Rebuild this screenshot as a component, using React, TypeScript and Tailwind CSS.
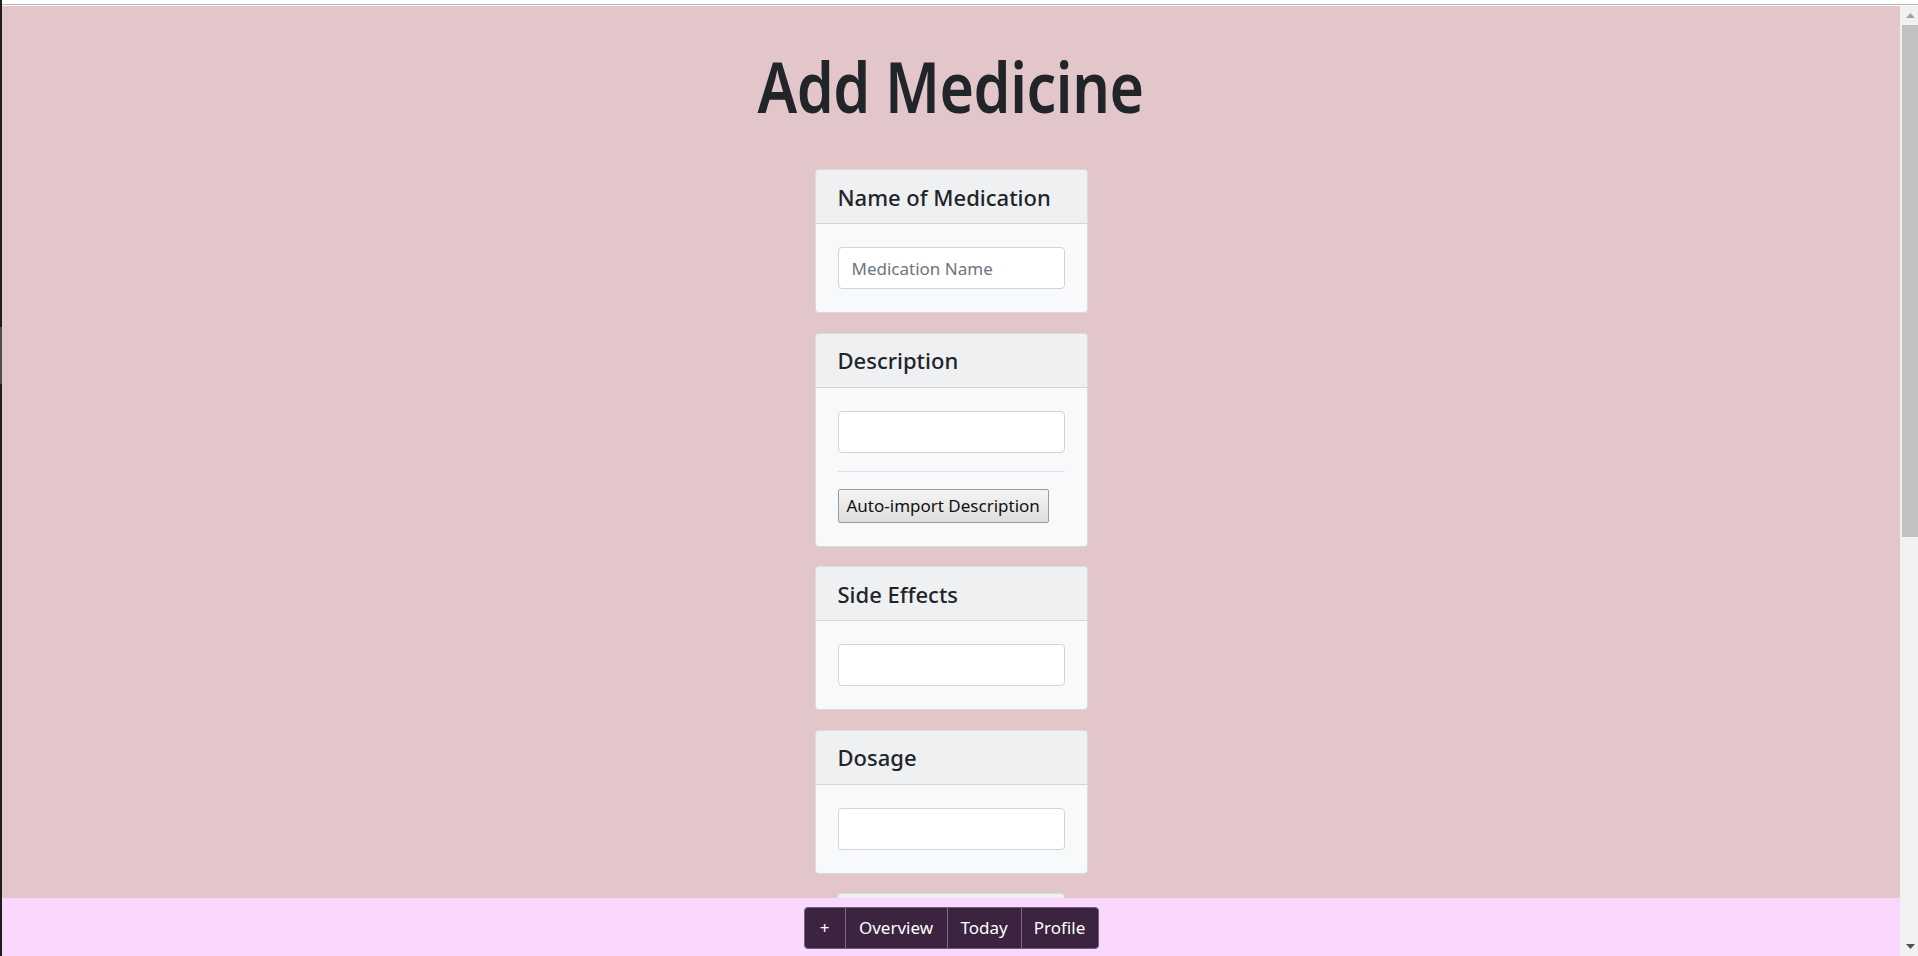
import React from "react";

function Card({ title, children }: { title: string; children: React.ReactNode }) {
  return (
    <div className="w-[273px] rounded-[4px] border border-[#dadbdc] bg-[#f8f9fa] overflow-hidden">
      <div className="h-[54px] flex items-center px-[22px] border-b border-[#d3d4d6] bg-[#eff0f2] text-[22px] font-medium leading-none text-[#212529]">
        {title}
      </div>
      <div className="px-[22px] py-[23px]">{children}</div>
    </div>
  );
}

function Field({ placeholder }: { placeholder?: string }) {
  return (
    <input
      placeholder={placeholder}
      className="block w-full h-[42px] rounded-[4px] border border-[#ced4da] bg-white px-[13px] text-[17px] text-[#495057] placeholder:text-[#6c757d] outline-none"
    />
  );
}

export default function App() {
  return (
    <div className="flex w-[1918px] h-[956px] overflow-hidden font-['Noto_Sans',sans-serif] bg-white">
      <div className="w-[2px] flex flex-col">
        <div className="h-[327px] bg-[#1e1e1e]" />
        <div className="h-[57px] bg-[#4e4e4e]" />
        <div className="flex-1 bg-[#1e1e1e]" />
      </div>
      <div className="flex-1 flex flex-col min-w-0">
        <div className="h-[4px] bg-white" />
        <div className="h-px bg-[#b5b5b5]" />
        <div className="h-px bg-white" />
        <div className="flex-1 flex min-h-0">
          <div className="flex-1 flex flex-col bg-[#e2c6ca] min-w-0">
            <div className="flex-1 min-h-0 overflow-hidden flex flex-col items-center">
              <h1 className="mt-[38px] inline-block scale-x-[0.845] text-[70px] leading-[84px] font-semibold tracking-[-0.5px] text-[#212529]">
                Add Medicine
              </h1>
              <div className="mt-[41px] flex flex-col items-center gap-[19.5px]">
                <Card title="Name of Medication">
                  <Field placeholder="Medication Name" />
                </Card>
                <Card title="Description">
                  <Field />
                  <div className="mt-[18px] mb-[17px] h-px bg-[#dfe1e4]" />
                  <button className="h-[34px] px-[8px] border border-[#9a9a9a] rounded-[2px] bg-gradient-to-b from-[#f5f5f5] to-[#dedede] text-[17px] leading-none text-[#111]">
                    Auto-import Description
                  </button>
                </Card>
                <Card title="Side Effects">
                  <Field />
                </Card>
                <Card title="Dosage">
                  <Field />
                </Card>
                <div className="w-[228px] h-[30px] shrink-0 rounded-t-[4px] border border-[#dadbdc] bg-[#eff0f2]" />
              </div>
            </div>
            <div className="h-[58px] shrink-0 bg-[#fbd7fd] flex justify-center pt-[9px]">
              <div className="flex h-[42px] rounded-[4px] border border-[#6e6577] bg-[#3c2340] overflow-hidden text-[17px] text-white">
                <div className="w-[40px] flex items-center justify-center">+</div>
                <div className="w-[102px] flex items-center justify-center border-l border-[#7a6f82]">Overview</div>
                <div className="w-[74px] flex items-center justify-center border-l border-[#7a6f82]">Today</div>
                <div className="w-[77px] flex items-center justify-center border-l border-[#7a6f82]">Profile</div>
              </div>
            </div>
          </div>
          <div className="w-[18px] shrink-0 bg-[#f1f1f1] flex flex-col">
            <div className="h-[19px] flex items-center justify-center pl-[2px]">
              <svg width="9" height="5" viewBox="0 0 9 5">
                <polygon points="0,5 4.5,0 9,5" fill="#a3a3a3" />
              </svg>
            </div>
            <div className="ml-[2px] h-[512px] bg-[#c1c1c1]" />
            <div className="flex-1" />
            <div className="h-[17px] flex items-start justify-center pl-[2px] pt-[5px]">
              <svg width="9" height="5" viewBox="0 0 9 5">
                <polygon points="0,0 9,0 4.5,5" fill="#505050" />
              </svg>
            </div>
          </div>
        </div>
      </div>
    </div>
  );
}
